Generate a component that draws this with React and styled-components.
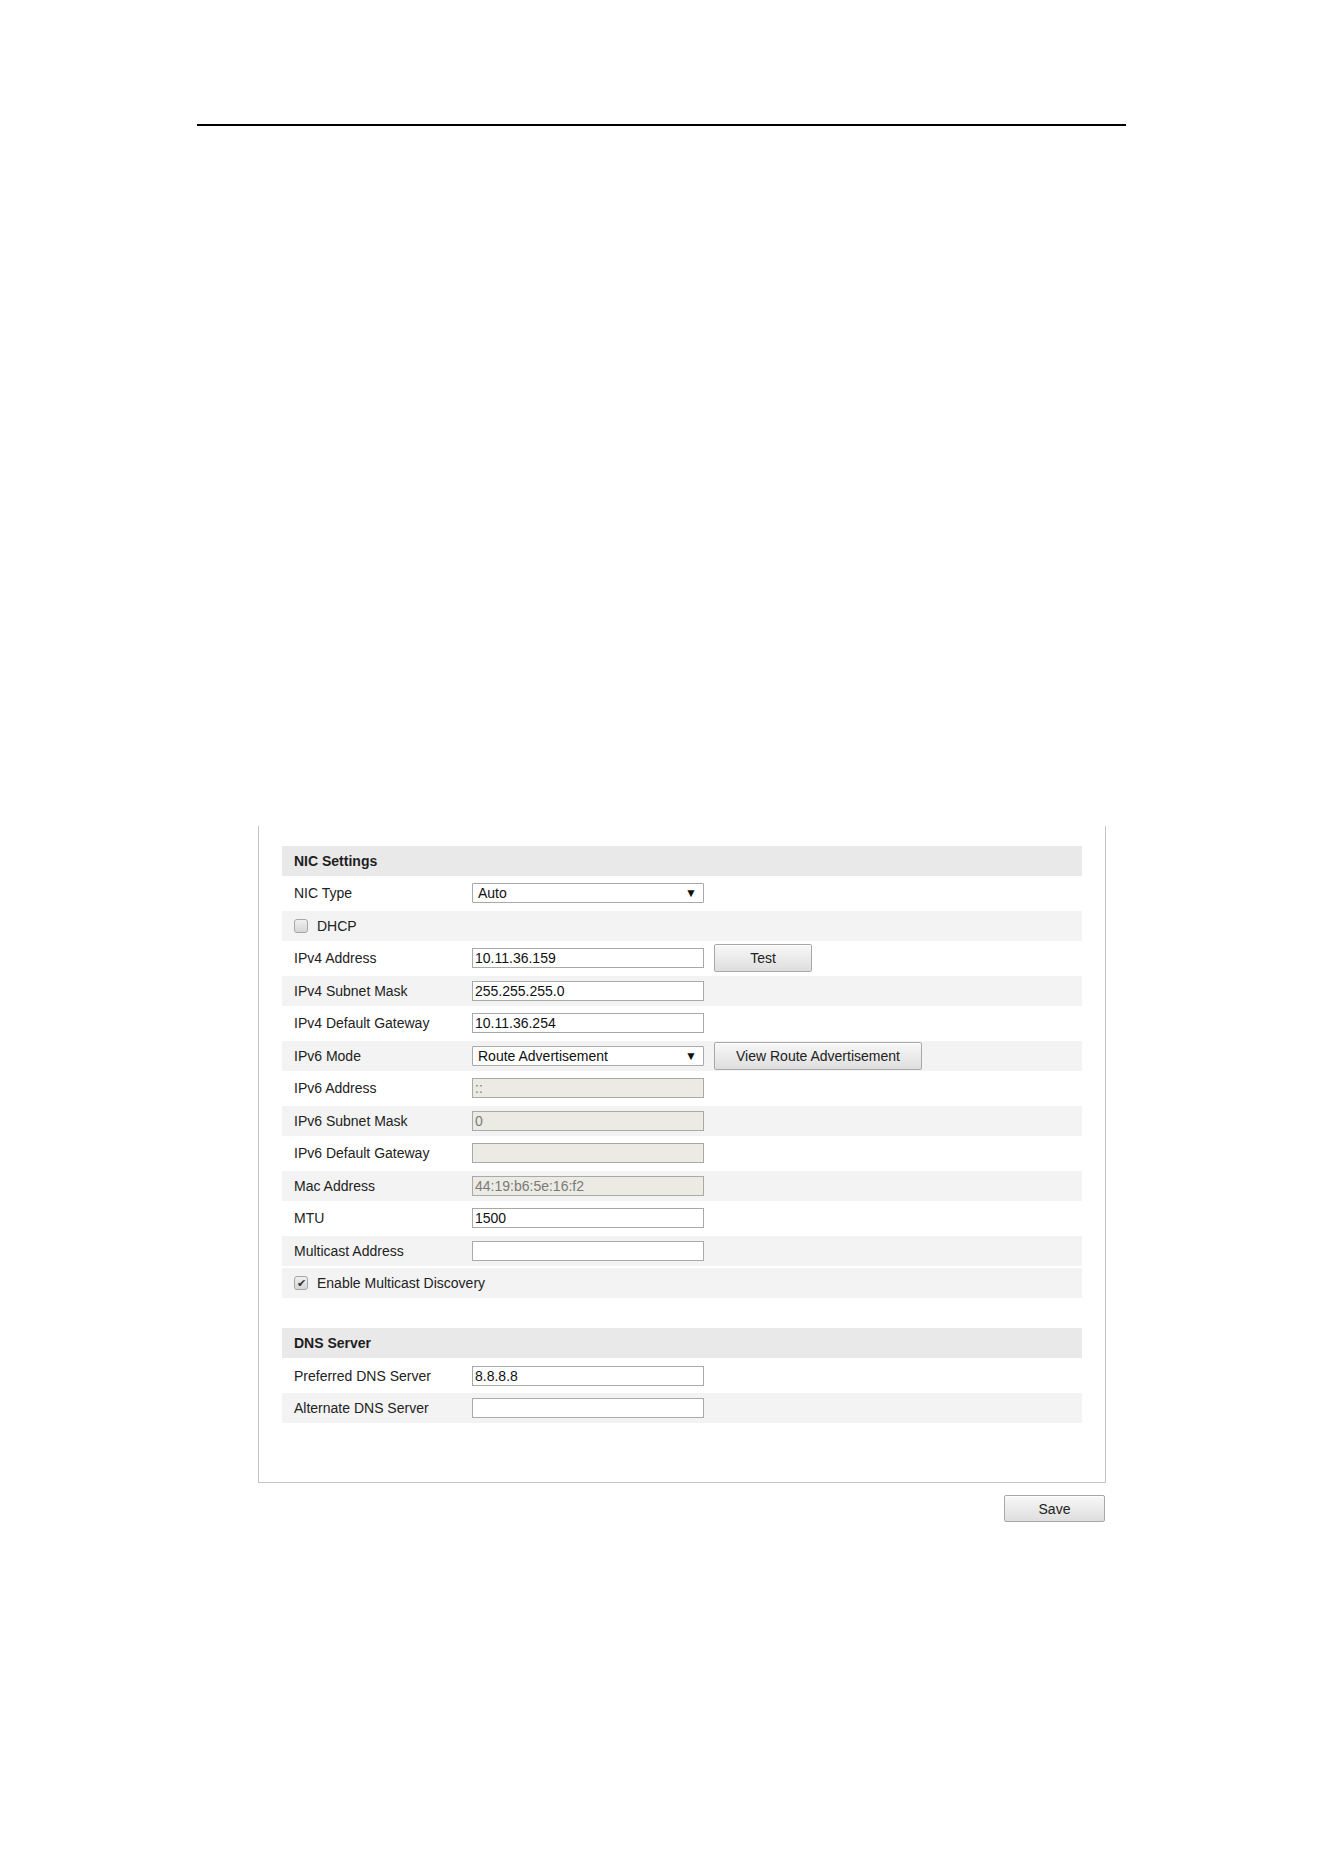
import styled, { createGlobalStyle } from 'styled-components'

const GlobalStyle = createGlobalStyle`
  body {
    margin: 0;
    background: #ffffff;
    font-family: "Liberation Sans", Arial, sans-serif;
    color: #222;
  }
`

const Page = styled.div`
  width: 1324px;
  min-height: 1872px;
  padding-top: 124px;
  box-sizing: border-box;
`

const Rule = styled.div`
  margin-left: 197px;
  width: 929px;
  height: 1.5px;
  background: #000;
`

const Wrapper = styled.div`
  margin: 700px 0 0 258px;
  width: 848px;
`

// open-topped config panel
const Panel = styled.div`
  border: 1px solid #c4c4c4;
  border-top: none;
  padding: 20px 23px 59px 23px;
  display: flex;
  flex-direction: column;
  gap: 30px;
`

const Section = styled.div`
  display: flex;
  flex-direction: column;
  gap: 2.5px;
`

const Header = styled.div`
  height: 30px;
  background: #e9e9e9;
  display: flex;
  align-items: center;
  padding-left: 12px;
  font-size: 14px;
  font-weight: bold;
  color: #1e1e1e;
`

const Row = styled.div`
  height: 30px;
  display: flex;
  align-items: center;
  padding-left: 12px;
  background: ${(p) => (p.$shade ? '#f3f3f3' : 'transparent')};
  font-size: 14px;
  color: #222;
`

const Label = styled.span`
  width: 178px;
  flex-shrink: 0;
`

const Field = styled.div`
  width: 232px;
  height: 20px;
  box-sizing: border-box;
  border: 1px solid #a9a9a9;
  background: ${(p) => (p.$disabled ? '#ebebe4' : '#fff')};
  color: ${(p) => (p.$disabled ? '#7a7a7a' : '#111')};
  font-size: 14px;
  line-height: 18px;
  padding: 0 2px;
  white-space: nowrap;
  overflow: hidden;
`

const SelectBox = styled.div`
  width: 232px;
  height: 20px;
  box-sizing: border-box;
  border: 1px solid #a9a9a9;
  border-radius: 1px;
  background: #fff;
  display: flex;
  align-items: center;
  justify-content: space-between;
  padding: 0 6px 0 5px;
  font-size: 14px;
  color: #111;
`

const Arrow = styled.span`
  font-size: 12px;
  color: #111;
`

const Button = styled.button`
  height: ${(p) => p.$height || 28}px;
  width: ${(p) => (p.$width ? `${p.$width}px` : 'auto')};
  margin-left: ${(p) => p.$gap || 0}px;
  padding: 0 21px;
  border: 1px solid #a8a8a8;
  border-radius: 2px;
  background: linear-gradient(#f8f8f8, #dedede);
  box-shadow: inset 0 1px 0 #ffffff;
  font-family: "Liberation Sans", Arial, sans-serif;
  font-size: 14px;
  color: #222;
  cursor: pointer;
`

const Check = styled.span`
  width: 14px;
  height: 14px;
  box-sizing: border-box;
  border: 1px solid #a6a6a6;
  border-radius: 3px;
  background: linear-gradient(#f0f0f0, #d6d6d6);
  display: inline-flex;
  align-items: center;
  justify-content: center;
  font-size: 11px;
  line-height: 1;
  color: #333;
  margin-right: 9px;
`

const Footer = styled.div`
  display: flex;
  justify-content: flex-end;
  margin-top: 12px;
  margin-right: 1px;
`

const nicRows = [
  { label: 'NIC Type', select: 'Auto' },
  { label: 'DHCP', check: false },
  { label: 'IPv4 Address', value: '10.11.36.159', button: 'Test', width: 98 },
  { label: 'IPv4 Subnet Mask', value: '255.255.255.0' },
  { label: 'IPv4 Default Gateway', value: '10.11.36.254' },
  { label: 'IPv6 Mode', select: 'Route Advertisement', button: 'View Route Advertisement' },
  { label: 'IPv6 Address', value: '::', disabled: true },
  { label: 'IPv6 Subnet Mask', value: '0', disabled: true },
  { label: 'IPv6 Default Gateway', value: '', disabled: true },
  { label: 'Mac Address', value: '44:19:b6:5e:16:f2', disabled: true },
  { label: 'MTU', value: '1500' },
  { label: 'Multicast Address', value: '' },
  { label: 'Enable Multicast Discovery', check: true, shade: true },
]

const dnsRows = [
  { label: 'Preferred DNS Server', value: '8.8.8.8' },
  { label: 'Alternate DNS Server', value: '' },
]

const SettingRow = ({ row, index }) => {
  const shade = row.shade || index % 2 === 1

  if (row.check !== undefined) {
    return (
      <Row $shade={shade}>
        <Check>{row.check ? '✔' : ''}</Check>
        <span>{row.label}</span>
      </Row>
    )
  }

  return (
    <Row $shade={shade}>
      <Label>{row.label}</Label>
      {row.select ? (
        <SelectBox>
          <span>{row.select}</span>
          <Arrow>▼</Arrow>
        </SelectBox>
      ) : (
        <Field $disabled={row.disabled}>{row.value}</Field>
      )}
      {row.button && (
        <Button $gap={10} $width={row.width}>
          {row.button}
        </Button>
      )}
    </Row>
  )
}

const App = () => {
  return (
    <Page>
      <GlobalStyle />
      <Rule />
      <Wrapper>
        <Panel>
          <Section>
            <Header>NIC Settings</Header>
            {nicRows.map((row, i) => (
              <SettingRow key={row.label} row={row} index={i} />
            ))}
          </Section>
          <Section>
            <Header>DNS Server</Header>
            {dnsRows.map((row, i) => (
              <SettingRow key={row.label} row={row} index={i} />
            ))}
          </Section>
        </Panel>
        <Footer>
          <Button $width={101} $height={27}>
            Save
          </Button>
        </Footer>
      </Wrapper>
    </Page>
  )
}

export default App
